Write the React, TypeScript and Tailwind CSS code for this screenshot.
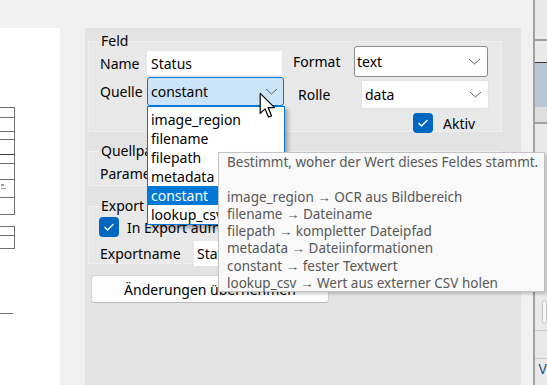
import React from "react";

const QUELLEN = ["image_region", "filename", "filepath", "metadata", "constant", "lookup_csv"];

const HILFE = [
  "image_region → OCR aus Bildbereich",
  "filename → Dateiname",
  "filepath → kompletter Dateipfad",
  "metadata → Dateiinformationen",
  "constant → fester Textwert",
  "lookup_csv → Wert aus externer CSV holen",
];

const Chevron = () => (
  <svg width="13" height="7" viewBox="0 0 13 7" className="shrink-0">
    <polyline points="1,1 6.5,6 12,1" fill="none" stroke="#5f5f5f" strokeWidth="1" />
  </svg>
);

const Check = () => (
  <span className="w-[20px] h-[20px] rounded-[4px] bg-[#0067c0] flex items-center justify-center shrink-0">
    <svg width="12" height="10" viewBox="0 0 12 10">
      <polyline points="1.5,5 4.5,8 10.5,2" fill="none" stroke="#ffffff" strokeWidth="1.3" />
    </svg>
  </span>
);

// Vorschau links: nur angeschnittene Tabellenlinien
const Vorschau = () => (
  <svg width="60" height="357" className="block">
    <g stroke="#707070" strokeWidth="1" fill="none">
      {[79, 89, 103, 111, 135, 151, 169, 186].map((y) => (
        <line key={y} x1="0" y1={y + 0.5} x2="14" y2={y + 0.5} />
      ))}
      <line x1="0" y1="126.5" x2="14" y2="126.5" stroke="#404040" />
      <line x1="14.5" y1="79" x2="14.5" y2="187" />
      <line x1="0" y1="198.5" x2="14" y2="198.5" />
      <line x1="0" y1="207.5" x2="14" y2="207.5" />
      <line x1="0" y1="220.5" x2="14" y2="220.5" />
      <line x1="14.5" y1="198" x2="14.5" y2="221" />
      <line x1="0" y1="285.5" x2="13" y2="285.5" />
    </g>
    <g fill="#9a9a9a">
      <rect x="1" y="156" width="3" height="2" />
      <rect x="1" y="160" width="5" height="1" />
    </g>
  </svg>
);

export default function App() {
  return (
    <div className="w-[547px] h-[385px] overflow-hidden bg-[#f0f0f0] flex relative font-['Noto_Sans',sans-serif] text-[14px] text-black">
      {/* linker Hauptbereich */}
      <div className="w-[533px] flex flex-col">
        <div className="h-[28px] shrink-0" />
        <div className="flex flex-1">
          <div className="w-[60px] bg-white">
            <Vorschau />
          </div>
          <div className="w-[25px]" />

          {/* Eigenschaften-Panel */}
          <div className="w-[436px] bg-[#e3e3e3] pl-[3px] pt-[3px] flex flex-col">
            <fieldset className="w-[414px] h-[101px] border border-[#efefef] bg-[#e8e8e8]">
              <legend className="ml-[10px] px-[2px] leading-[20px]">Feld</legend>
              <div className="flex pl-[11px]">
                <div className="flex flex-col w-[185px]">
                  <div className="flex items-center h-[24px]">
                    <span className="w-[47px]">Name</span>
                    <div className="w-[135px] h-[24px] bg-white pl-[4px] flex items-center">Status</div>
                  </div>
                  <div className="flex items-center h-[29px] mt-[2px]">
                    <span className="w-[47px]">Quelle</span>
                    <div className="relative w-[137px] h-[29px] bg-[#cce4f7] border border-[#0078d7] rounded-[3px] pl-[3px] pr-[5px] flex items-center justify-between">
                      <span>constant</span>
                      <Chevron />
                      {/* aufgeklappte Liste */}
                      <div className="absolute left-[-1px] top-[28px] w-[138px] bg-white border border-[#0078d7] pt-[3px] z-10 shadow-[3px_3px_4px_rgba(0,0,0,0.3)]">
                        {QUELLEN.map((q) => (
                          <div
                            key={q}
                            className={
                              q === "constant"
                                ? "h-[19px] leading-[19px] pl-[3px] bg-[#0078d7] text-white"
                                : "h-[19px] leading-[19px] pl-[3px]"
                            }
                          >
                            {q}
                          </div>
                        ))}
                      </div>
                    </div>
                  </div>
                </div>

                <div className="flex flex-col ml-[8px] mt-[-5px]">
                  <div className="flex items-center h-[31px]">
                    <span className="w-[61px]">Format</span>
                    <div className="w-[134px] h-[31px] bg-white border border-[#8a8a8a] rounded-[3px] pl-[2px] pr-[6px] flex items-center justify-between">
                      <span>text</span>
                      <Chevron />
                    </div>
                  </div>
                  <div className="flex items-center h-[29px] mt-[3px]">
                    <span className="w-[68px] pl-[5px]">Rolle</span>
                    <div className="w-[128px] h-[29px] bg-white border border-[#e2e2e2] rounded-[2px] pl-[3px] pr-[6px] flex items-center justify-between">
                      <span>data</span>
                      <Chevron />
                    </div>
                  </div>
                  <div className="flex items-center h-[20px] mt-[4px] pl-[120px] gap-[10px]">
                    <Check />
                    <span>Aktiv</span>
                  </div>
                </div>
              </div>
            </fieldset>

            <fieldset className="w-[414px] h-[45px] mt-[9px] border border-[#efefef] bg-[#e8e8e8]">
              <legend className="ml-[10px] px-[2px] leading-[20px]">Quellparameter</legend>
              <div className="flex items-center h-[24px] pl-[11px]">
                <span className="w-[94px]">Parameter</span>
                <div className="w-[200px] h-[24px] bg-white" />
              </div>
            </fieldset>

            <fieldset className="w-[414px] h-[68px] mt-[10px] border border-[#efefef] bg-[#e8e8e8]">
              <legend className="ml-[10px] px-[2px] leading-[20px]">Export</legend>
              <div className="flex items-center h-[20px] mt-[1px] pl-[10px] gap-[8px]">
                <Check />
                <span>In Export aufnehmen</span>
              </div>
              <div className="flex items-center h-[25px] mt-[4px] pl-[11px]">
                <span className="w-[94px]">Exportname</span>
                <div className="w-[200px] h-[25px] bg-white pl-[3px] flex items-center">Status</div>
              </div>
            </fieldset>

            <button className="mt-[11px] ml-[3px] w-[238px] h-[28px] bg-[#fdfdfd] border border-[#d4d4d4] border-b-[#b8b8b8] rounded-[4px] flex items-center justify-center">
              Änderungen übernehmen
            </button>
          </div>
          <div className="w-[12px] bg-[#f0f0f0]" />
        </div>
      </div>

      {/* Trennlinie und rechte Liste */}
      <div className="w-[3px] bg-[#a0a0a0]" />
      <div className="flex-1 flex flex-col bg-[#e9e9e9]">
        <div className="h-[39px]" />
        <div className="h-[2px] bg-[#a0a0a0]" />
        <div className="h-[21px]" />
        <div className="h-[1px] bg-[#3a3a3a]" />
        <div className="h-[44px] bg-[#b6c6d7]" />
        <div className="h-[15px] bg-[#dedede]" />
        <div className="h-[2px] bg-[#a0a0a0]" />
        <div className="h-[176px]" />
        <div className="h-[24px] ml-[7px] border border-[#c4c4c4] rounded-[4px] bg-[#f6f6f6]" />
        <div className="h-[6px]" />
        <div className="h-[1px] bg-[#c8c8c8]" />
        <div className="h-[27px]" />
        <div className="h-[1px] bg-[#c8c8c8]" />
        <div className="pl-[4px] text-[#1b4f8a] leading-[20px]">V</div>
      </div>

      {/* Tooltip */}
      <div className="absolute left-[218px] top-[152px] w-[327px] h-[140px] bg-[#f9f9f9] border border-[#c3c3c3] shadow-[2px_2px_3px_rgba(0,0,0,0.2)] pl-[8px] pt-[1px] text-[13.5px] leading-[17.3px] text-[#575757] z-20 whitespace-nowrap">
        <div>Bestimmt, woher der Wert dieses Feldes stammt.</div>
        <div className="h-[17.3px]" />
        {HILFE.map((z) => (
          <div key={z}>{z}</div>
        ))}
      </div>

      {/* Mauszeiger */}
      <svg width="17" height="27" viewBox="0 0 14 22" className="absolute left-[259px] top-[92px] z-30">
        <path d="M1 1 L1 17.5 L5 13.8 L7.8 20.5 L10.3 19.5 L7.6 12.8 L12.8 12.8 Z" fill="#ffffff" stroke="#000000" strokeWidth="1" strokeLinejoin="round" />
      </svg>
    </div>
  );
}
